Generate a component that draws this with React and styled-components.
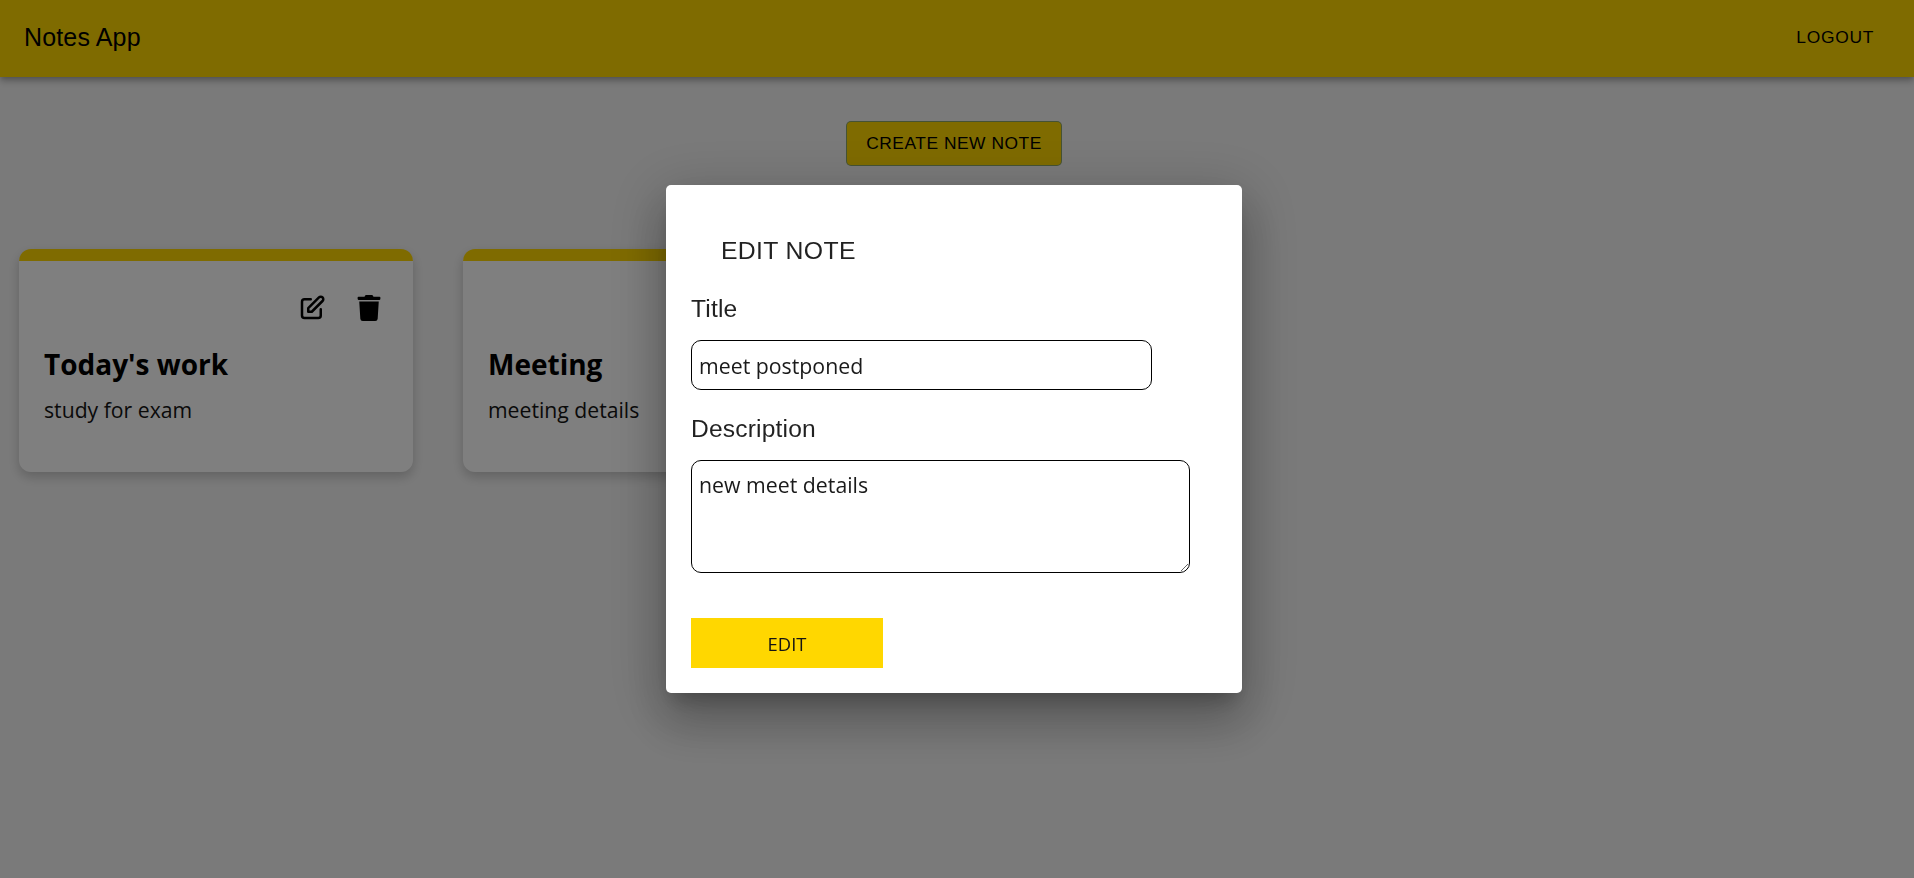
import React from "react";
import styled, { createGlobalStyle } from "styled-components";
import { FaTrash } from "react-icons/fa";
import { HiOutlinePencilAlt } from "react-icons/hi";

const GlobalStyle = createGlobalStyle`
  html, body {
    margin: 0;
    padding: 0;
    height: 100%;
    background: #f5f5f5;
    font-family: "Open Sans", "Noto Sans", sans-serif;
    overflow: hidden;
  }
`;

const Header = styled.header`
  height: 77px;
  padding: 0 24px;
  display: flex;
  align-items: center;
  justify-content: space-between;
  background: #ffd700;
  box-shadow: 0 2px 5px -1px rgba(0, 0, 0, 0.2), 0 5px 6px 0 rgba(0, 0, 0, 0.14),
    0 1px 12px 0 rgba(0, 0, 0, 0.12);
`;

const Brand = styled.div`
  margin-top: -2px;
  font-family: "Liberation Sans", Arial, sans-serif;
  font-size: 25px;
  letter-spacing: 0.15px;
  color: #000;
`;

const TextButton = styled.button`
  border: 0;
  background: none;
  margin-top: -2px;
  padding: 7px 10px;
  margin-right: 6px;
  font-family: "Liberation Sans", Arial, sans-serif;
  font-size: 17.4px;
  letter-spacing: 0.7px;
  color: #000;
`;

const Main = styled.main`
  display: flex;
  flex-direction: column;
  padding: 44px 6px 0 0;
`;

const CreateButton = styled.button`
  align-self: center;
  height: 45px;
  padding: 0 19px;
  border: 1px solid rgba(25, 118, 210, 0.5);
  border-radius: 5px;
  background: #ffd700;
  font-family: "Liberation Sans", Arial, sans-serif;
  font-size: 17.4px;
  letter-spacing: 0.52px;
  color: #000;
`;

const NoteGrid = styled.section`
  display: flex;
  gap: 50px;
  margin-top: 83px;
  padding-left: 19px;
`;

const NoteCard = styled.article`
  box-sizing: border-box;
  width: 394px;
  height: 223px;
  padding: 0 25px;
  border-top: 12px solid #ffd700;
  border-radius: 12px;
  background: #fff;
  box-shadow: 0 5px 12px rgba(0, 0, 0, 0.2);
`;

const CardActions = styled.div`
  display: flex;
  justify-content: flex-end;
  align-items: center;
  gap: 29px;
  height: 50px;
  padding: 22px 6px 0 0;
  color: #000;
`;

const NoteTitle = styled.h3`
  margin: 12px 0 0;
  font-size: 28px;
  line-height: 38px;
  font-weight: 700;
  color: #000;
`;

const NoteText = styled.p`
  margin: 12px 0 0;
  font-size: 21.2px;
  line-height: 30px;
  color: #141414;
`;

const Backdrop = styled.div`
  position: fixed;
  inset: 0;
  padding-right: 6px;
  display: flex;
  align-items: center;
  justify-content: center;
  background: rgba(0, 0, 0, 0.5);
`;

const Modal = styled.div`
  box-sizing: border-box;
  width: 576px;
  height: 508px;
  padding: 0 25px;
  border-radius: 5px;
  background: #fff;
  box-shadow: 0 13px 18px -8px rgba(0, 0, 0, 0.24), 0 29px 46px 4px rgba(0, 0, 0, 0.18),
    0 11px 55px 10px rgba(0, 0, 0, 0.16);
`;

const ModalTitle = styled.h2`
  margin: 0;
  padding: 51px 0 0 30px;
  font-family: "Liberation Sans", Arial, sans-serif;
  font-size: 24.8px;
  line-height: 30px;
  font-weight: 400;
  letter-spacing: 0.33px;
  color: rgba(0, 0, 0, 0.87);
`;

const Field = styled.label`
  display: block;
  font-family: "Liberation Sans", Arial, sans-serif;
  font-size: 24.6px;
  line-height: 30px;
  letter-spacing: 0.17px;
  color: rgba(0, 0, 0, 0.87);
`;

const TitleField = styled(Field)`
  margin-top: 28px;
`;

const DescriptionField = styled(Field)`
  margin-top: 24px;
`;

const TextInput = styled.input`
  display: block;
  box-sizing: border-box;
  width: 461px;
  height: 50px;
  margin-top: 16px;
  padding: 1px 7px 0;
  border: 1px solid #000;
  border-radius: 10px;
  outline: 0;
  font-family: "Open Sans", sans-serif;
  font-size: 21.3px;
  color: #1a1a1a;
`;

const TextArea = styled.textarea`
  display: block;
  box-sizing: border-box;
  width: 499px;
  height: 113px;
  margin-top: 16px;
  padding: 9px 7px;
  border: 1px solid #000;
  border-radius: 10px;
  outline: 0;
  font-family: "Open Sans", sans-serif;
  font-size: 21.3px;
  color: #1a1a1a;
`;

const SubmitButton = styled.button`
  display: block;
  width: 192px;
  height: 50px;
  margin-top: 45px;
  border: 0;
  background: #ffd700;
  font-family: "Open Sans", sans-serif;
  font-size: 18.4px;
  color: #141414;
`;

const notes = [
  { id: 1, title: "Today's work", text: "study for exam" },
  { id: 2, title: "Meeting", text: "meeting details" },
];

export default function App() {
  return (
    <>
      <GlobalStyle />
      <Header>
        <Brand>Notes App</Brand>
        <TextButton>LOGOUT</TextButton>
      </Header>
      <Main>
        <CreateButton>CREATE NEW NOTE</CreateButton>
        <NoteGrid>
          {notes.map((note) => (
            <NoteCard key={note.id}>
              <CardActions>
                <HiOutlinePencilAlt size={30} />
                <FaTrash size={26} />
              </CardActions>
              <NoteTitle>{note.title}</NoteTitle>
              <NoteText>{note.text}</NoteText>
            </NoteCard>
          ))}
        </NoteGrid>
      </Main>
      <Backdrop>
        <Modal>
          <ModalTitle>EDIT NOTE</ModalTitle>
          <TitleField>
            Title
            <TextInput defaultValue="meet postponed" />
          </TitleField>
          <DescriptionField>
            Description
            <TextArea defaultValue="new meet details" />
          </DescriptionField>
          <SubmitButton>EDIT</SubmitButton>
        </Modal>
      </Backdrop>
    </>
  );
}
